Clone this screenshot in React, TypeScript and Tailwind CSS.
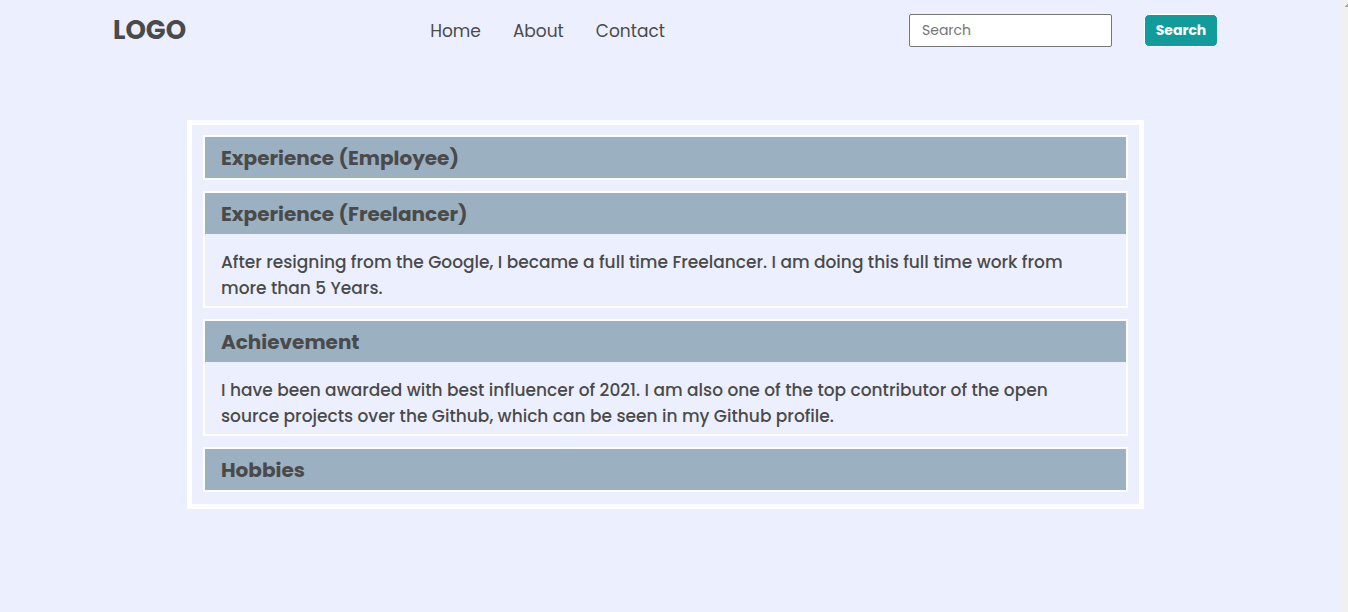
import { useState } from "react";

const links = ["Home", "About", "Contact"];

const sections = [
  {
    id: "employee",
    title: "Experience (Employee)",
    body: "",
    open: false,
  },
  {
    id: "freelancer",
    title: "Experience (Freelancer)",
    body: "After resigning from the Google, I became a full time Freelancer. I am doing this full time work from more than 5 Years.",
    open: true,
  },
  {
    id: "achievement",
    title: "Achievement",
    body: "I have been awarded with best influencer of 2021. I am also one of the top contributor of the open source projects over the Github, which can be seen in my Github profile.",
    open: true,
  },
  { id: "hobbies", title: "Hobbies", body: "", open: false },
];

type Section = (typeof sections)[number];

function Header() {
  return (
    <header className="flex h-[60px] items-center justify-between px-[113px]">
      <a href="#" className="text-[26px] font-bold leading-none">
        LOGO
      </a>
      <nav className="flex gap-8 pt-1 text-[17px]">
        {links.map((label) => (
          <a key={label} href={"#" + label.toLowerCase()}>
            {label}
          </a>
        ))}
      </nav>
      <form className="flex items-center gap-8" onSubmit={(e) => e.preventDefault()}>
        <input
          type="search"
          aria-label="Search"
          placeholder="Search"
          className="h-[33px] w-[203px] rounded-xs border border-[#767676] bg-white px-3 text-sm placeholder:text-[#757575]"
        />
        <button
          type="submit"
          className="h-[33px] w-[74px] rounded-[5px] border border-white bg-[#129b9b] text-sm font-bold text-white"
        >
          Search
        </button>
      </form>
    </header>
  );
}

function AccordionItem({ section }: { section: Section }) {
  const [open, setOpen] = useState(section.open);
  return (
    <section className="border-2 border-white">
      <h2>
        <button
          type="button"
          aria-expanded={open}
          onClick={() => setOpen(!open)}
          className="block h-[41px] w-full bg-[#9bb0c1] px-4 text-left text-xl font-bold"
        >
          {section.title}
        </button>
      </h2>
      {open && section.body && (
        <p className="px-4 pt-[15px] pb-[5px] text-[17px] leading-[26px] font-medium">
          {section.body}
        </p>
      )}
    </section>
  );
}

export default function App() {
  return (
    <div className="flex min-h-screen bg-[#ecf0fe] font-[Poppins,Inter,sans-serif] text-[#4a4a4a]">
      <div className="flex-1 pr-[9px]">
        <Header />
        <main className="mx-[187px] mt-[60px] flex flex-col gap-[11px] border-[5px] border-white px-[11px] pt-[10px] pb-3">
          {sections.map((section) => (
            <AccordionItem key={section.id} section={section} />
          ))}
        </main>
      </div>
      <div className="w-2 bg-[#f0f0f0]">
        <svg viewBox="0 0 8 8" className="ml-auto h-2 w-[3px]" preserveAspectRatio="xMaxYMin slice" aria-hidden="true">
          <path d="M5 7V6H6V5H7V4H8V7Z" fill="#a3a3a3" />
        </svg>
      </div>
    </div>
  );
}
